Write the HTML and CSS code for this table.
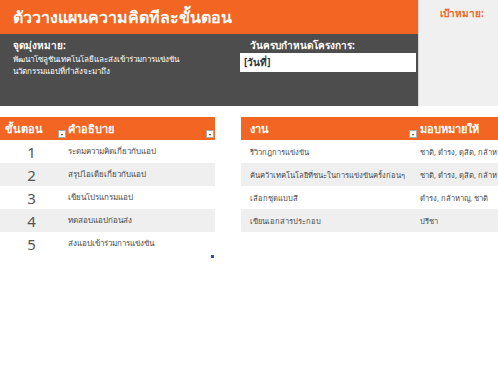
FILE: index.html
```html
<!DOCTYPE html>
<html lang="th">
<head>
<meta charset="utf-8">
<title>ตัววางแผนความคิดทีละขั้นตอน</title>
<link rel="stylesheet" href="styles.css">
</head>
<body>
<div class="page">
  <div class="top">
    <div class="main">
      <div class="title">ตัววางแผนความคิดทีละขั้นตอน</div>
      <div class="info">
        <div class="purpose">
          <div class="label">จุดมุ่งหมาย:</div>
          <div class="desc">พัฒนาโซลูชันเทคโนโลยีและส่งเข้าร่วมการแข่งขัน<br>นวัตกรรมแอปที่กำลังจะมาถึง</div>
        </div>
        <div class="due">
          <div class="label">วันครบกำหนดโครงการ:</div>
          <div class="datebox">[วันที่]</div>
        </div>
      </div>
    </div>
    <div class="goal">
      <div class="goal-label">เป้าหมาย:</div>
    </div>
  </div>

  <div class="tables">
    <div class="table steps">
      <div class="row head">
        <div class="cell c-num">ขั้นตอน<span class="filter"></span></div>
        <div class="cell c-desc">คำอธิบาย<span class="filter"></span></div>
      </div>
      <div class="row"><div class="cell c-num num">1</div><div class="cell c-desc">ระดมความคิดเกี่ยวกับแอป</div></div>
      <div class="row alt"><div class="cell c-num num">2</div><div class="cell c-desc">สรุปไอเดียเกี่ยวกับแอป</div></div>
      <div class="row"><div class="cell c-num num">3</div><div class="cell c-desc">เขียนโปรแกรมแอป</div></div>
      <div class="row alt"><div class="cell c-num num">4</div><div class="cell c-desc">ทดสอบแอปก่อนส่ง</div></div>
      <div class="row"><div class="cell c-num num">5</div><div class="cell c-desc">ส่งแอปเข้าร่วมการแข่งขัน</div></div>
      <span class="handle"></span>
    </div>

    <div class="table tasks">
      <div class="row head">
        <div class="cell c-task">งาน<span class="filter"></span></div>
        <div class="cell c-who">มอบหมายให้</div>
      </div>
      <div class="row"><div class="cell c-task">รีวิวกฎการแข่งขัน</div><div class="cell c-who">ชาติ, ดำรง, ดุสิต, กล้าหาญ</div></div>
      <div class="row alt"><div class="cell c-task">ค้นคว้าเทคโนโลยีที่ชนะในการแข่งขันครั้งก่อนๆ</div><div class="cell c-who">ชาติ, ดำรง, ดุสิต, กล้าหาญ</div></div>
      <div class="row"><div class="cell c-task">เลือกชุดแบบสี</div><div class="cell c-who">ดำรง, กล้าหาญ, ชาติ</div></div>
      <div class="row alt"><div class="cell c-task">เขียนเอกสารประกอบ</div><div class="cell c-who">ปรีชา</div></div>
    </div>
  </div>
</div>
</body>
</html>
```

FILE: styles.css
```css
html, body {
  margin: 0;
  padding: 0;
  background: #ffffff;
}
body {
  width: 498px;
  height: 382px;
  overflow: hidden;
  font-family: "Noto Sans", "DejaVu Sans", sans-serif;
}
.page {
  width: 498px;
}
.top {
  display: flex;
  height: 106px;
}
.main {
  width: 418px;
  display: flex;
  flex-direction: column;
  border-right: 1px solid #d6d6d6;
}
.title {
  height: 34px;
  background: #f26522;
  color: #ffffff;
  font-weight: bold;
  font-size: 16px;
  line-height: 34px;
  padding-left: 13px;
  box-sizing: border-box;
}
.info {
  flex: 1;
  background: #4d4d4d;
  display: flex;
  padding-top: 5px;
  box-sizing: border-box;
}
.purpose {
  width: 240px;
  padding-left: 13px;
  box-sizing: border-box;
}
.label {
  color: #ffffff;
  font-weight: bold;
  font-size: 10px;
  line-height: 13px;
}
.desc {
  color: #ffffff;
  font-size: 8px;
  line-height: 12px;
  margin-top: 1px;
}
.due {
  flex: 1;
}
.due .label {
  padding-left: 10px;
}
.datebox {
  background: #ffffff;
  height: 19px;
  margin-top: 1px;
  width: 176px;
  color: #333333;
  font-size: 10px;
  font-weight: bold;
  line-height: 19px;
  padding-left: 4px;
  box-sizing: border-box;
}
.goal {
  flex: 1;
  background: #f0f0f0;
  padding-top: 6px;
  padding-left: 21px;
}
.goal-label {
  color: #f26522;
  font-weight: bold;
  font-size: 10px;
}
.tables {
  display: flex;
  gap: 26px;
  margin-top: 11px;
}
.table {
  position: relative;
}
.steps {
  width: 215px;
  flex: none;
}
.tasks {
  flex: none;
  width: 257px;
}
.row {
  display: flex;
  height: 23px;
  align-items: center;
}
.row.alt {
  background: #efefef;
}
.row.head {
  background: #f26522;
  color: #ffffff;
  font-weight: bold;
  font-size: 11px;
}
.cell {
  position: relative;
  height: 100%;
  display: flex;
  align-items: center;
  box-sizing: border-box;
  font-size: 8px;
  color: #4a4a4a;
  white-space: nowrap;
  overflow: hidden;
}
.row.head .cell {
  color: #ffffff;
  font-size: 11px;
}
.c-num {
  width: 67px;
  padding-left: 5px;
}
.num {
  justify-content: center;
  font-size: 15px;
  color: #555555;
  padding-left: 0;
  padding-right: 4px;
}
.c-desc {
  flex: 1;
  padding-left: 1px;
}
.c-task {
  width: 177px;
  padding-left: 9px;
  font-size: 7.6px;
}
.c-who {
  flex: 1;
  padding-left: 2px;
  font-size: 7.6px;
}
.filter {
  position: absolute;
  right: 1px;
  bottom: 2px;
  width: 8px;
  height: 8px;
  background: #ffffff;
  border: 1px solid #aaaaaa;
  box-sizing: border-box;
}
.filter::after {
  content: "";
  position: absolute;
  left: 2px;
  top: 3px;
  border-left: 1.5px solid transparent;
  border-right: 1.5px solid transparent;
  border-top: 2px solid #444444;
}
.handle {
  position: absolute;
  right: 1px;
  bottom: -3px;
  width: 3px;
  height: 3px;
  background: #2b4fb5;
}
```
